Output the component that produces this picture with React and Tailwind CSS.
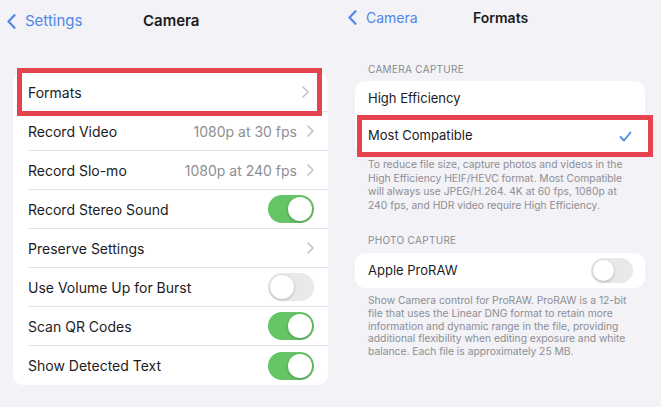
import React from "react";

const font = { fontFamily: "Inter, 'Noto Sans', sans-serif" };

function Chevron() {
  return (
    <svg width="7" height="12" viewBox="0 0 7 12" className="shrink-0">
      <path d="M1 1l5 5-5 5" fill="none" stroke="#c4c4c8" strokeWidth="1.6" strokeLinecap="round" strokeLinejoin="round" />
    </svg>
  );
}

function BackChevron() {
  return (
    <svg width="9" height="15" viewBox="0 0 9 15" className="shrink-0">
      <path d="M7.5 1.2L1.5 7.5l6 6.3" fill="none" stroke="#4f88e6" strokeWidth="2.2" strokeLinecap="round" strokeLinejoin="round" />
    </svg>
  );
}

function Toggle({ on, small }) {
  const w = small ? "w-[42px] h-[25px]" : "w-[46px] h-[28px]";
  const k = small ? "w-[21px] h-[21px]" : "w-[24px] h-[24px]";
  return (
    <div className={`${w} rounded-full p-[2px] flex shrink-0 ${on ? "bg-[#65c466] justify-end" : "bg-[#e9e9eb] justify-start"}`}>
      <div className={`${k} rounded-full bg-white shadow-[0_1px_3px_rgba(0,0,0,0.25)]`} />
    </div>
  );
}

function Row({ label, value, chevron, toggle, last }) {
  return (
    <div className="h-[39px] pl-[15px] flex">
      <div className={`flex-1 flex items-center pr-[14px] ${last ? "" : "border-b border-[#e3e3e8]"}`}>
        <span className="flex-1 text-[14px] text-[#1c1c1e]">{label}</span>
        {value && <span className="text-[14px] text-[#8e8e93] mr-[10px]">{value}</span>}
        {chevron && <Chevron />}
        {toggle !== undefined && <Toggle on={toggle} />}
      </div>
    </div>
  );
}

export default function App() {
  return (
    <div className="w-[661px] h-[407px] bg-[#f2f2f7] flex overflow-hidden" style={font}>
      {/* Left panel */}
      <div className="w-[330px] flex flex-col">
        <div className="h-[42px] relative flex items-center pl-[7px]">
          <BackChevron />
          <span className="ml-[9px] text-[15px] text-[#4f88e6]">Settings</span>
          <span className="absolute left-[143px] text-[15px] font-semibold text-[#1c1c1e]">Camera</span>
        </div>
        <div className="mt-[31px] ml-[13px] mr-[2px] bg-white rounded-[10px] relative">
          <Row label="Formats" chevron />
          <div className="absolute left-[4px] top-[-5px] w-[305px] h-[48px] border-[5px] border-[#e5434d] bg-white flex items-center pl-[6px] pr-[8px]">
            <span className="flex-1 text-[14px] text-[#1c1c1e]">Formats</span>
            <Chevron />
          </div>
          <Row label="Record Video" value="1080p at 30 fps" chevron />
          <Row label="Record Slo-mo" value="1080p at 240 fps" chevron />
          <Row label="Record Stereo Sound" toggle={true} />
          <Row label="Preserve Settings" chevron />
          <Row label="Use Volume Up for Burst" toggle={false} />
          <Row label="Scan QR Codes" toggle={true} />
          <Row label="Show Detected Text" toggle={true} last />
        </div>
      </div>

      {/* Right panel */}
      <div className="w-[331px] flex flex-col">
        <div className="h-[34px] relative flex items-center pl-[18px]">
          <BackChevron />
          <span className="ml-[9px] text-[14px] text-[#4f88e6]">Camera</span>
          <span className="absolute left-[143px] text-[14px] font-semibold text-[#1c1c1e]">Formats</span>
        </div>
        <div className="mt-[29px] h-[13px] pl-[38px] text-[10px] leading-[13px] text-[#8a8a8e] tracking-[0.3px]">CAMERA CAPTURE</div>
        <div className="mt-[5px] ml-[25px] mr-[16px] bg-white rounded-[10px] relative">
          <div className="h-[36px] pl-[13px] flex">
            <div className="flex-1 flex items-center border-b border-[#e3e3e8]">
              <span className="text-[13px] text-[#1c1c1e]">High Efficiency</span>
            </div>
          </div>
          <div className="h-[36px]" />
          <div className="absolute left-[2px] top-[34px] w-[296px] h-[42px] border-[5px] border-[#e5434d] bg-white flex items-center pl-[6px] pr-[16px]">
            <span className="flex-1 text-[13px] text-[#1c1c1e]">Most Compatible</span>
            <svg width="13" height="11" viewBox="0 0 13 11">
              <path d="M1.5 6l3.5 3.5L11.5 1.5" fill="none" stroke="#4f88e6" strokeWidth="1.8" strokeLinecap="round" strokeLinejoin="round" />
            </svg>
          </div>
        </div>
        <div className="mt-[5px] pl-[38px] whitespace-nowrap text-[10.3px] leading-[13.5px] text-[#8e8e93]">
          To reduce file size, capture photos and videos in the<br />
          High Efficiency HEIF/HEVC format. Most Compatible<br />
          will always use JPEG/H.264. 4K at 60 fps, 1080p at<br />
          240 fps, and HDR video require High Efficiency.
        </div>
        <div className="mt-[22px] h-[13px] pl-[38px] text-[10px] leading-[13px] text-[#8a8a8e] tracking-[0.3px]">PHOTO CAPTURE</div>
        <div className="mt-[6px] ml-[25px] mr-[16px] h-[35px] bg-white rounded-[10px] flex items-center pl-[13px] pr-[12px]">
          <span className="flex-1 text-[13px] text-[#1c1c1e]">Apple ProRAW</span>
          <Toggle on={false} small />
        </div>
        <div className="mt-[6px] pl-[38px] whitespace-nowrap text-[10.3px] leading-[12.8px] text-[#8e8e93]">
          Show Camera control for ProRAW. ProRAW is a 12-bit<br />
          file that uses the Linear DNG format to retain more<br />
          information and dynamic range in the file, providing<br />
          additional flexibility when editing exposure and white<br />
          balance. Each file is approximately 25 MB.
        </div>
      </div>
    </div>
  );
}
